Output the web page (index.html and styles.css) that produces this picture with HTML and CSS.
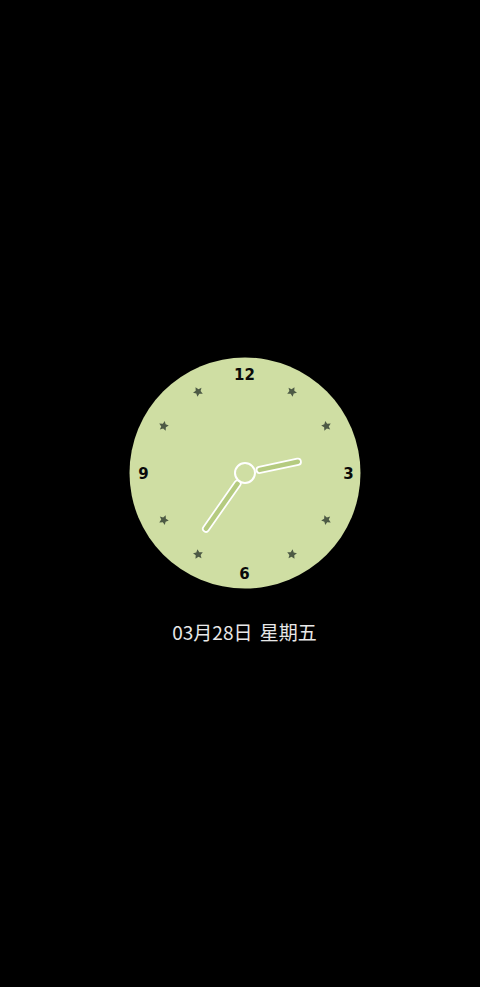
FILE: index.html
```html
<!DOCTYPE html>
<html lang="zh">
<head>
<meta charset="utf-8">
<title>Clock</title>
<link rel="stylesheet" href="styles.css">
</head>
<body>
<main class="screen">
  <svg class="clock" viewBox="0 0 232 232" width="232" height="232" aria-label="clock">
    <defs>
      <path id="star" d="M0,-5 L1.6,-1.8 L4.9,-1.5 L2.5,0.9 L3.1,4.2 L0,2.6 L-3.1,4.2 L-2.5,0.9 L-4.9,-1.5 L-1.6,-1.8 Z"/>
    </defs>
    <circle class="face" cx="116" cy="116" r="115.5"/>
    <g class="stars" transform="translate(116 116)">
      <use href="#star" transform="rotate(30) translate(0 -94)"/>
      <use href="#star" transform="rotate(60) translate(0 -94)"/>
      <use href="#star" transform="rotate(120) translate(0 -94)"/>
      <use href="#star" transform="rotate(150) translate(0 -94)"/>
      <use href="#star" transform="rotate(210) translate(0 -94)"/>
      <use href="#star" transform="rotate(240) translate(0 -94)"/>
      <use href="#star" transform="rotate(300) translate(0 -94)"/>
      <use href="#star" transform="rotate(330) translate(0 -94)"/>
    </g>
    <g class="nums">
      <text x="115.5" y="18">12</text>
      <text x="219.5" y="117">3</text>
      <text x="115.5" y="217">6</text>
      <text x="14.5" y="117">9</text>
    </g>
    <g transform="translate(116 116)">
      <g transform="rotate(78)">
        <line class="hand-out" x1="0" y1="-15" x2="0" y2="-54"/>
        <line class="hand-in" x1="0" y1="-15" x2="0" y2="-54"/>
      </g>
      <g transform="rotate(215)">
        <line class="hand-out" x1="0" y1="-13" x2="0" y2="-68"/>
        <line class="hand-in" x1="0" y1="-13" x2="0" y2="-68"/>
      </g>
      <circle class="hub" cx="0" cy="0" r="10"/>
    </g>
  </svg>
  <p class="date">03月28日 星期五</p>
</main>
</body>
</html>
```
FILE: styles.css
```css
html, body {
  margin: 0;
  padding: 0;
  background: #000;
}
.screen {
  width: 480px;
  height: 987px;
  box-sizing: border-box;
  padding-top: 357px;
  padding-left: 9px;
  display: flex;
  flex-direction: column;
  align-items: center;
}
.clock {
  display: block;
}
.face {
  fill: #cfdea3;
}
.stars use {
  fill: #4d5a45;
}
.nums text {
  font-family: "DejaVu Sans", sans-serif;
  font-weight: bold;
  font-size: 15px;
  fill: #0a0a0a;
  text-anchor: middle;
  dominant-baseline: central;
}
.hand-out {
  stroke: #fff;
  stroke-width: 8;
  stroke-linecap: round;
}
.hand-in {
  stroke: #b5cb80;
  stroke-width: 4.5;
  stroke-linecap: round;
}
.hub {
  fill: #cfdea3;
  stroke: #fff;
  stroke-width: 2;
}
.date {
  margin: 30px 0 0;
  font-family: "Noto Sans CJK SC", "Noto Sans", sans-serif;
  font-size: 19px;
  line-height: 26px;
  word-spacing: 3px;
  color: #e8e8e8;
}
```
